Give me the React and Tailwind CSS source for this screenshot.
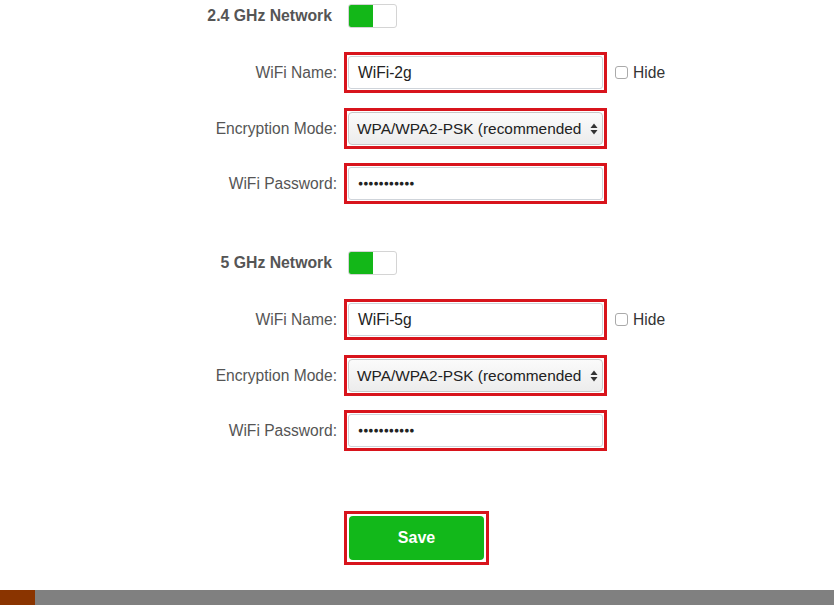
import React from 'react';

const font = { fontFamily: '"Liberation Sans", Arial, sans-serif' };

const Toggle = () => (
  <div className="flex h-[24px] w-[49px] overflow-hidden rounded-[3px] border border-[#d4d4d4] bg-white">
    <div className="h-full w-[24px] bg-[#13b718]" />
  </div>
);

const Heading = ({ title, className }) => (
  <div className={`flex items-center h-[24px] ${className}`}>
    <div className="w-[332px] text-right text-[15.8px] font-bold text-[#555]">{title}</div>
    <div className="ml-[16px]">
      <Toggle />
    </div>
  </div>
);

const Box = ({ children }) => (
  <div className="w-[263px] h-[41px] border-[3px] border-[#d8141c] p-[1px] bg-white">{children}</div>
);

const Row = ({ label, className, children, extra }) => (
  <div className={`flex items-center ${className}`}>
    <div className="w-[337px] text-right text-[15.6px] text-[#555]">{label}</div>
    <div className="ml-[7px]">
      <Box>{children}</Box>
    </div>
    {extra}
  </div>
);

const TextInput = ({ value }) => (
  <div className="flex h-full items-center rounded-[3px] border border-[#cfd4da] bg-white px-[9px] text-[15.6px] text-[#222]">
    {value}
  </div>
);

const Select = () => (
  <div className="flex h-full items-center rounded-[4px] border border-[#c8c8c8] bg-gradient-to-b from-[#fbfbfb] to-[#ececec] pl-[8px] pr-[4px] text-[15.4px] text-[#222]">
    <span className="whitespace-nowrap">WPA/WPA2-PSK (recommended</span>
    <svg width="8" height="12" viewBox="0 0 8 12" className="ml-auto shrink-0">
      <path d="M4 0.5 L7.5 5 H0.5 Z" fill="#333" />
      <path d="M4 11.5 L7.5 7 H0.5 Z" fill="#333" />
    </svg>
  </div>
);

const Password = () => (
  <div className="flex h-full items-center rounded-[3px] border border-[#cfd4da] bg-white px-[9px] text-[8.5px] text-[#222]">
    ●●●●●●●●●●●
  </div>
);

const Hide = () => (
  <div className="ml-[8px] flex items-center gap-[5px] text-[15.6px] text-[#333]">
    <div className="h-[13px] w-[13px] rounded-[3px] border border-[#aaa] bg-white" />
    <span>Hide</span>
  </div>
);

const Network = ({ title, name, top }) => (
  <>
    <Heading title={title} className={top} />
    <Row label="WiFi Name:" className="mt-[24px]" extra={<Hide />}>
      <TextInput value={name} />
    </Row>
    <Row label="Encryption Mode:" className="mt-[15px]">
      <Select />
    </Row>
    <Row label="WiFi Password:" className="mt-[14px]">
      <Password />
    </Row>
  </>
);

export default function App() {
  return (
    <div className="w-[834px] h-[605px] bg-white overflow-hidden flex flex-col" style={font}>
      <Network title="2.4 GHz Network" name="WiFi-2g" top="mt-[4px]" />
      <Network title="5 GHz Network" name="WiFi-5g" top="mt-[47px]" />
      <div className="mt-[60px] ml-[344px] w-[145px] h-[54px] border-[3px] border-[#d8141c] p-[2px] bg-white">
        <button className="h-full w-full rounded-[4px] bg-[#12b81a] text-[16px] font-bold text-white">Save</button>
      </div>
      <div className="mt-auto flex h-[15px]">
        <div className="w-[35px] bg-[#8a3400]" />
        <div className="flex-1 bg-[#808080]" />
      </div>
    </div>
  );
}
